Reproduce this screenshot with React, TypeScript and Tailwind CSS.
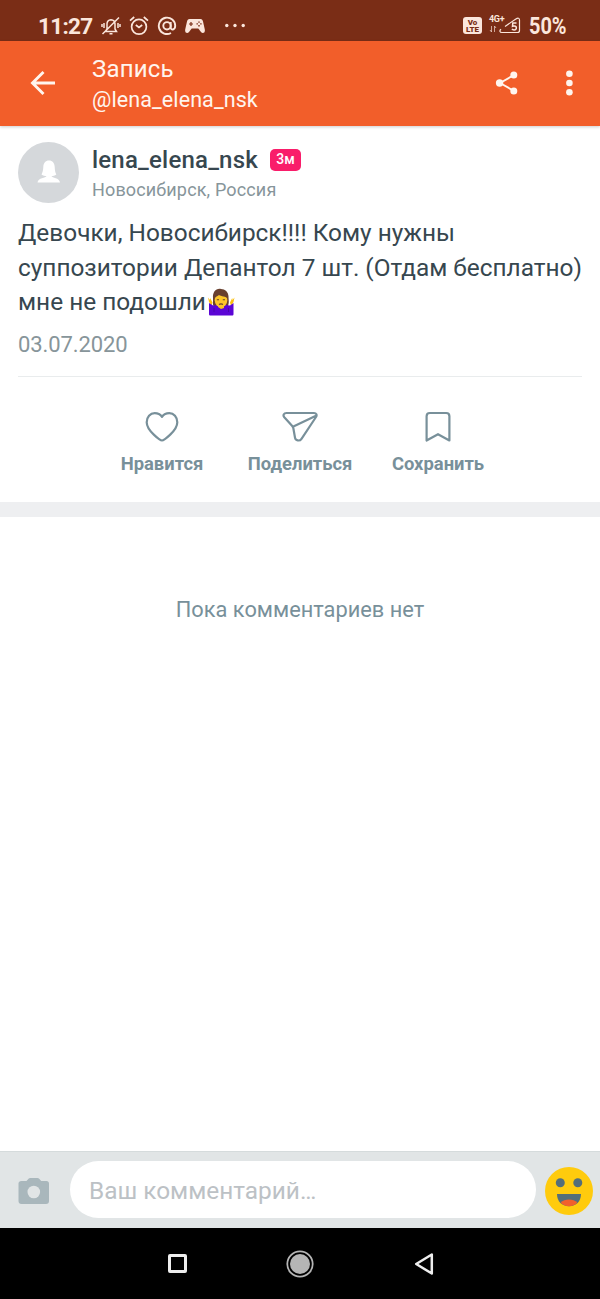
import type { ReactNode } from 'react';

interface PostAction {
  label: string;
  icon: ReactNode;
}

const post = {
  author: 'lena_elena_nsk',
  badge: '3м',
  location: 'Новосибирск, Россия',
  lines: [
    'Девочки, Новосибирск!!!! Кому нужны',
    'суппозитории Депантол 7 шт. (Отдам бесплатно)',
  ],
  lastLine: 'мне не подошли',
  date: '03.07.2020',
};

const actions: PostAction[] = [
  {
    label: 'Нравится',
    icon: (
      <path d="M18 30.5C16.5 30.5 2.7 21 2.7 12.3C2.7 7 6.2 3.2 10.7 3.2C14.2 3.2 16.5 4.7 18 6.8C19.5 4.7 21.8 3.2 25.3 3.2C29.8 3.2 33.3 7 33.3 12.3C33.3 21 19.5 30.5 18 30.5Z" />
    ),
  },
  {
    label: 'Поделиться',
    icon: (
      <path d="M4.5 3H32C34.3 3 35.3 5.1 34 7L19.5 28.8C17.7 31.5 13.5 30.8 13 27.6L11.3 18C11.1 17 10.8 16.6 10 15.7L2.3 7.2C.7 5.3 1.7 3 4.5 3ZM11.4 16.5L34 5.8" />
    ),
  },
  {
    label: 'Сохранить',
    icon: <path d="M6.6 30.5V6.2C6.6 4.3 7.9 3 9.8 3H26.2C28.1 3 29.4 4.3 29.4 6.2V30.5L18 24.2Z" />,
  },
];

function StatusBar() {
  return (
    <div className="flex h-[41px] items-end bg-[#7a2d16] pb-1 pl-[38px] text-[#fbe6dc]">
      <span className="w-[63px] text-[22.5px] leading-[21px] font-bold tracking-[-0.7px]">11:27</span>
      <svg className="h-[22px] w-[20px]" viewBox="0 0 20 22" fill="none" stroke="currentColor" strokeWidth="1.5">
        <path d="M4.5 16.5H15.5L14 14V9C14 6.5 12.5 5 10 4.7C7.5 5 6 6.5 6 9V14ZM8.5 18.8H11.5M1.5 19L18 2.5M3 8V13M1 9V12M17 8V13M19 9V12" />
      </svg>
      <svg className="ml-[8px] h-[22px] w-[20px]" viewBox="0 0 20 22" fill="none" stroke="currentColor" strokeWidth="1.7">
        <circle cx="10" cy="11.8" r="7.4" />
        <path d="M6.8 10L10 12.5L13.2 10M1 5.7L5.2 2M14.8 2L19 5.7" />
      </svg>
      <svg className="ml-[8px] h-[22px] w-[20px]" viewBox="0 0 20 22" fill="none" stroke="currentColor" strokeWidth="1.9">
        <circle cx="10" cy="10.8" r="3.7" />
        <path d="M13.7 7.1V12.3C13.7 15.8 18.2 15.1 18.2 10.8A8.2 8.2 0 1 0 14 18" />
      </svg>
      <svg className="ml-[8px] h-[22px] w-[20px]" viewBox="0 0 20 22">
        <path
          fill="currentColor"
          d="M4.5 4H15.5C17 4 17.6 4.900 18 6.500L19.8 14.5C20.4 18 17.5 18.700 16 17L13.3 13.5H6.7L4 17C2.5 18.700-.4 18 .2 14.5L2 6.500C2.4 4.900 3 4 4.500 4Z"
        />
        <path stroke="#7a2d16" strokeWidth="1.2" d="M4 9H8M6 7V11" />
        <path fill="#7a2d16" d="M13.3 6.4h1.400v1.400h-1.400zM13.3 10h1.400v1.400h-1.400zM11.5 8.2h1.400v1.400h-1.400zM15.2 8.2h1.400v1.400h-1.400z" />
      </svg>
      <svg className="ml-[20px] h-[22px] w-[20px]" viewBox="0 0 20 22" fill="currentColor">
        <circle cx="1.8" cy="10.5" r="1.7" />
        <circle cx="10" cy="10.5" r="1.7" />
        <circle cx="18.2" cy="10.5" r="1.7" />
      </svg>
      <div className="mb-[3px] ml-[218px] flex h-[17px] w-[19px] flex-col items-center justify-center rounded-[3px] bg-[#fbe6dc] text-[8px] leading-[7px] font-black text-[#7a2d16]">
        <span className="h-[7px]">Vo</span>
        <span className="h-[7px]">LTE</span>
      </div>
      <div className="ml-[7px] flex h-[22px] w-[32px] flex-col">
        <span className="h-[8px] text-[9px] leading-[8px] font-bold tracking-[-0.3px]">4G+</span>
        <svg className="-mt-[7px] h-[20px] w-[32px] shrink-0" viewBox="0 0 32 20" fill="none" stroke="currentColor">
          <path strokeWidth="1" opacity=".65" d="M2.5 10V16M5.5 10V16M1 14L2.5 16M7 12L5.5 10" />
          <path strokeWidth="1.2" d="M16 10.4L26.5 3.3C29 1.7 30.5 1.8 30.5 4V14.5C30.5 16 30 16.5 28.5 16.5H13C10.5 16.5 10.3 14.6 12 13.3" />
          <path strokeWidth="1.5" d="M27.5 7H23.8L23.5 10.3C25.5 9.4 28 10.3 27.3 12.5C26.7 14.3 23.8 14.3 23 12.8" />
        </svg>
      </div>
      <span className="ml-[8px] origin-left scale-x-[0.83] text-[24px] leading-[21px] font-bold">50%</span>
    </div>
  );
}

function Header() {
  return (
    <header className="flex h-[85px] items-center bg-[#f25e2a] text-[#fff5ee] shadow-[0_1px_3px_rgba(0,0,0,0.2)]">
      <svg className="mb-px ml-[30px] h-[26px] w-[26px]" viewBox="0 0 26 26" fill="none" stroke="currentColor" strokeWidth="2.9">
        <path d="M25 13H3M13.5 2L2.5 13L13.5 24" />
      </svg>
      <div className="ml-9 flex flex-1 flex-col pt-px">
        <h1 className="text-[24px] leading-[31px] tracking-[0.2px]">Запись</h1>
        <p className="text-[21.5px] leading-[29px] tracking-[0.1px]">@lena_elena_nsk</p>
      </div>
      <svg className="mb-px h-6 w-6" viewBox="0 0 24 24" fill="currentColor">
        <path d="M5 12L19 4M5 12L19 20" stroke="currentColor" strokeWidth="1.9" />
        <circle cx="4.6" cy="12" r="3.7" />
        <circle cx="18.8" cy="3.9" r="3.5" />
        <circle cx="18.8" cy="20" r="3.5" />
      </svg>
      <svg className="mr-[27px] mb-px ml-[46px] h-[26px] w-[8px]" viewBox="0 0 8 26" fill="currentColor">
        <circle cx="4.4" cy="3.8" r="3.3" />
        <circle cx="4.4" cy="13" r="3.3" />
        <circle cx="4.4" cy="22.2" r="3.3" />
      </svg>
    </header>
  );
}

function ShrugEmoji() {
  return (
    <svg className="ml-[2px] h-[28px] w-[27px]" viewBox="0 0 27 28">
      <path fill="#69402f" d="M13 1C8 0 4.5 4 5 10C5.2 14 4.5 16 5.5 18H20C21.5 14 20.5 12 20.5 8.5C20.5 4 17 1 13 1Z" />
      <path fill="#fbbf0f" d="M0 9.5L2 12L2.3 10L4.5 14.5L3.5 18L1 14ZM26.5 9.5L24.5 12L24.2 10L22 14.5L23 18L25.5 14Z" />
      <path fill="#5b05d5" d="M1 15L5 17.5L10 17L14 20L17.5 17L22 17.5L25.5 15V26C25.5 27 25 27.5 24 27.5H2.5C1.5 27.5 1 27 1 26Z" />
      <path fill="#fbc21a" d="M10 15H16V20L13 21L10 19Z" />
      <ellipse cx="13" cy="12.3" rx="6.3" ry="7" fill="#fdc62a" />
      <path fill="#69402f" d="M6 11C7 9 9 8.5 11 7C13 8.5 18 8 20 11L19 5L13 2L7 5Z" />
      <path fill="none" stroke="#69402f" strokeWidth="1.1" d="M8.8 11.8H11M14.8 11.8H17M11 16.5C12.5 15.5 13.5 15.5 15 16.5" />
      <path fill="none" stroke="#4505a0" strokeWidth=".8" d="M6 20V24M20.5 20V24" />
    </svg>
  );
}

function Post() {
  return (
    <article className="flex flex-col">
      <div className="mt-[16px] flex h-[61px] items-center pl-[18px]">
        <svg className="h-[61px] w-[61px]" viewBox="0 0 61 61">
          <circle cx="30.5" cy="30.5" r="30.5" fill="#d5d8db" />
          <path
            fill="#fff"
            d="M31 18.5C27.5 18.5 25.5 21 25.3 25C25.2 28.5 24.5 30.500 23.500 32.500C25 33.700 27 34.200 28.500 34.200C28 36 20 35.500 19.500 40.500H42C41.500 35.500 34 36 33.500 34.200C35 34.200 36.800 33.700 38.300 32.500C37.300 30.500 36.800 28.500 36.700 25C36.500 21 34.500 18.500 31 18.500Z"
          />
        </svg>
        <div className="ml-[13px] flex flex-col">
          <div className="flex h-[34px] items-center">
            <span className="text-[24px] font-medium tracking-[0.2px] text-[#37474f]">{post.author}</span>
            <span className="ml-3 flex h-[22px] w-[31px] items-center justify-center rounded-[5px] bg-[#f91d6a] text-[14px] font-medium text-white">
              {post.badge}
            </span>
          </div>
          <span className="text-[18px] leading-[26px] tracking-[0.15px] text-[#87959a]">{post.location}</span>
        </div>
      </div>
      <div className="mt-[13px] pl-[18px] text-[24.4px] leading-[34.5px] whitespace-nowrap text-[#37474f]">
        {post.lines.map((line) => (
          <p key={line}>{line}</p>
        ))}
        <p className="flex items-center">
          {post.lastLine}
          <ShrugEmoji />
        </p>
      </div>
      <time className="mt-[10px] pl-[18px] text-[22px] leading-[30px] tracking-[-0.1px] text-[#87959a]">{post.date}</time>
      <div className="mx-[18px] mt-[16px] h-px bg-[#e9eced]" />
      <div className="flex h-[125px] justify-center pt-[33px] text-[#78909a]">
        {actions.map((action) => (
          <button key={action.label} className="flex w-[138px] flex-col items-center">
            <svg className="h-[33px] w-9" viewBox="0 0 36 33" fill="none" stroke="currentColor" strokeWidth="2.2" strokeLinejoin="round">
              {action.icon}
            </svg>
            <span className="mt-[8px] text-[18.4px] leading-[26px] font-bold">{action.label}</span>
          </button>
        ))}
      </div>
    </article>
  );
}

function CommentBar() {
  return (
    <div className="flex h-[77px] items-center border-t border-[#d5dbdc] bg-[#e1e5e6]">
      <svg className="mt-[2px] ml-[18px] h-[28px] w-[32px]" viewBox="0 0 32 28">
        <path
          fill="#a9b7bc"
          d="M3.5 4H8.5L10.5 1.8C11 1.2 11.5 1 12.2 1H19.5C20.2 1 20.7 1.2 21.2 1.8L23.2 4H28.5C30 4 31 5 31 6.5V24C31 25.8 30 27 28 27H3.5C1.5 27 .5 25.8 .5 24V6.5C.5 5 1.5 4 3.5 4Z"
        />
        <circle cx="15.8" cy="15" r="6.3" fill="#e1e5e6" />
      </svg>
      <div className="mb-px ml-5 flex h-[57px] w-[466px] items-center rounded-full bg-white pt-[3px] pl-[19px] text-[24.4px] text-[#bcc1c5]">
        Ваш комментарий…
      </div>
      <svg className="mt-[2px] ml-[9px] h-12 w-12" viewBox="0 0 48 48">
        <circle cx="24" cy="24" r="24" fill="#ffcb0d" />
        <circle cx="15.3" cy="15.7" r="4.5" fill="#546e7a" />
        <circle cx="32.8" cy="15.7" r="4.5" fill="#546e7a" />
        <path fill="#546e7a" d="M12 27H36C36 34.5 31 39.2 24 39.2C17 39.2 12 34.5 12 27Z" />
        <path fill="#f2602c" d="M15.7 35.7C19.5 31.3 28.5 31.3 32.3 35.7C30 38 27.5 39.2 24 39.2C20.5 39.2 18 38 15.7 35.7Z" />
      </svg>
    </div>
  );
}

function NavigationBar() {
  return (
    <nav className="flex h-[71px] items-center bg-black pl-[168px]">
      <div className="h-[19px] w-[19px] rounded-[2px] border-3 border-[#eeeeee]" />
      <svg className="ml-[99px] h-[28px] w-[28px]" viewBox="0 0 28 28">
        <circle cx="14" cy="14" r="12.7" fill="none" stroke="#b5b5b5" strokeWidth="1.8" />
        <circle cx="14" cy="14" r="10" fill="#b5b5b5" />
      </svg>
      <svg className="ml-[100px] h-[24px] w-[20px]" viewBox="0 0 20 24">
        <path fill="none" stroke="#eee" strokeWidth="2.5" strokeLinejoin="round" d="M17.8 2.5V21.5L2.2 12Z" />
      </svg>
    </nav>
  );
}

function App() {
  return (
    <div className="flex h-[1299px] w-[600px] flex-col overflow-hidden bg-white font-['Roboto',sans-serif]">
      <StatusBar />
      <Header />
      <Post />
      <main className="flex flex-1 flex-col">
        <div className="h-[15px] bg-[#eeeff1]" />
        <p className="mt-[78px] text-center text-[21.8px] leading-[30px] text-[#78909a]">Пока комментариев нет</p>
      </main>
      <CommentBar />
      <NavigationBar />
    </div>
  );
}

export default App;
